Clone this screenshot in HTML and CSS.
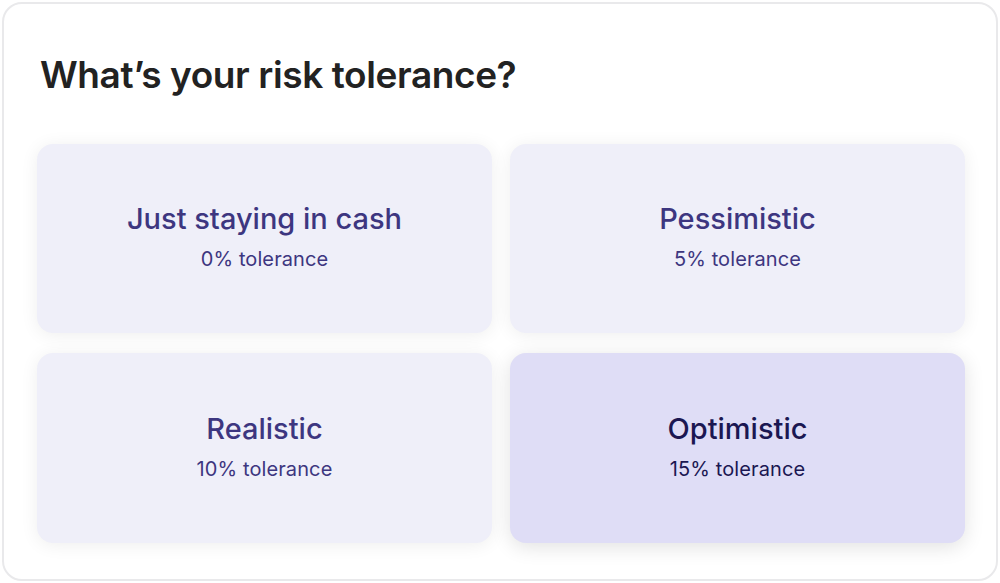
FILE: index.html
```html
<!DOCTYPE html>
<html>
<head>
<meta charset="utf-8">
<link rel="stylesheet" href="styles.css">
</head>
<body>
<div class="panel">
  <h1 class="heading">What’s your risk tolerance?</h1>
  <div class="options">
    <div class="option">
      <div class="option-title">Just staying in cash</div>
      <div class="option-sub">0% tolerance</div>
    </div>
    <div class="option">
      <div class="option-title">Pessimistic</div>
      <div class="option-sub">5% tolerance</div>
    </div>
    <div class="option">
      <div class="option-title">Realistic</div>
      <div class="option-sub">10% tolerance</div>
    </div>
    <div class="option selected">
      <div class="option-title">Optimistic</div>
      <div class="option-sub">15% tolerance</div>
    </div>
  </div>
</div>
</body>
</html>
```
FILE: styles.css
```css
* { box-sizing: border-box; }
html, body { margin: 0; padding: 0; background: #ffffff; }
body {
  font-family: Inter, "Noto Sans", sans-serif;
  width: 1000px;
  height: 583px;
  padding: 2px;
}
.panel {
  width: 996px;
  height: 579px;
  border: 2px solid #e9e9eb;
  border-radius: 20px;
  padding: 0 31px 36px 33px;
  display: flex;
  flex-direction: column;
}
.heading {
  margin: 45px 0 0 3px;
  font-size: 37px;
  line-height: 52px;
  font-weight: 600;
  color: #222222;
  letter-spacing: -0.4px;
}
.options {
  margin-top: 43px;
  display: grid;
  grid-template-columns: 1fr 1fr;
  grid-template-rows: 189px 190px;
  column-gap: 18px;
  row-gap: 20px;
}
.option {
  background: #efeff9;
  border-radius: 16px;
  box-shadow: 0 2px 18px rgba(0, 0, 0, 0.07);
  display: flex;
  flex-direction: column;
  align-items: center;
  justify-content: center;
  color: #3d3680;
  padding-bottom: 5px;
}
.option-title {
  font-size: 29px;
  font-weight: 500;
  line-height: 36px;
  letter-spacing: 0px;
}
.option-sub {
  font-size: 20px;
  font-weight: 400;
  line-height: 24px;
  margin-top: 10px;
  letter-spacing: 0.1px;
}
.option.selected {
  background: #dfddf6;
  color: #1b1752;
  box-shadow: 0 4px 20px rgba(0, 0, 0, 0.12);
}
```
